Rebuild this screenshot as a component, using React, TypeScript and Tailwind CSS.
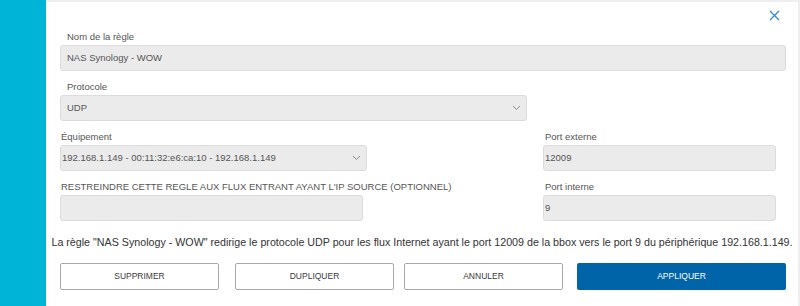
import { ReactNode } from "react";

const font = { fontFamily: '"Liberation Sans", Arial, sans-serif' };

function Label({ children, className = "pl-[7px]" }: { children: ReactNode; className?: string }) {
  return <div className={`h-4 whitespace-nowrap text-[9.5px] leading-4 text-[#555] ${className}`}>{children}</div>;
}

function Field({ value, className = "" }: { value?: string; className?: string }) {
  return (
    <div
      className={`flex h-[26px] items-center rounded-[3px] border border-[#dcdcdc] bg-[#ebebeb] text-[9.5px] text-[#555] ${className}`}
    >
      {value}
    </div>
  );
}

function Select({ value, className = "" }: { value: string; className?: string }) {
  return (
    <div
      className={`flex h-[26px] items-center justify-between rounded-[3px] border border-[#dcdcdc] bg-[#ebebeb] pr-[5px] text-[9.5px] text-[#555] ${className}`}
    >
      <span>{value}</span>
      <svg width="9" height="6" viewBox="0 0 9 6" fill="none">
        <path d="M1 1l3.5 3.5L8 1" stroke="#8a8a8a" strokeWidth="1" />
      </svg>
    </div>
  );
}

function Button({ children, primary, className = "" }: { children: ReactNode; primary?: boolean; className?: string }) {
  return (
    <button
      className={`flex h-[27px] items-center justify-center rounded-[2px] text-[8.5px] ${
        primary ? "bg-[#0064a8] text-white" : "border border-[#a9a9a9] bg-white text-[#3a3a3a]"
      } ${className}`}
    >
      {children}
    </button>
  );
}

export default function App() {
  return (
    <div className="flex h-[306px] w-[800px] overflow-hidden bg-white" style={font}>
      <div className="w-[46px] shrink-0 bg-[#00b4d7]" />
      <div className="relative min-w-0 flex-1 border-r-2 border-t-2 border-[#efefef] pl-[14px] pr-[12px] pt-[27px]">
        <button className="absolute right-[18px] top-[8px] text-[#3a8bd0]">
          <svg width="11" height="11" viewBox="0 0 11 11" fill="none">
            <path d="M1 1l9 9M10 1l-9 9" stroke="currentColor" strokeWidth="1.4" />
          </svg>
        </button>

        <Label>Nom de la règle</Label>
        <Field value="NAS Synology - WOW" className="mb-2 pl-[6px]" />

        <Label>Protocole</Label>
        <Select value="UDP" className="mb-2 w-[467px] pl-[6px]" />

        <div className="flex">
          <div className="w-[307px]">
            <Label className="pl-[1px]">Équipement</Label>
            <Select value="192.168.1.149 - 00:11:32:e6:ca:10 - 192.168.1.149" className="mb-2 pl-[1px]" />
            <Label className="pl-[1px]">
              RESTREINDRE CETTE REGLE AUX FLUX ENTRANT AYANT L'IP SOURCE (OPTIONNEL)
            </Label>
            <Field className="w-[303px]" />
          </div>
          <div className="ml-[176px] w-[233px]">
            <Label className="pl-[2px]">Port externe</Label>
            <Field value="12009" className="mb-2 pl-[1px]" />
            <Label className="pl-[2px]">Port interne</Label>
            <Field value="9" className="pl-[1px]" />
          </div>
        </div>

        <div className="-ml-[14px] -mr-[12px] mt-[13px] flex justify-center">
          <p className="whitespace-nowrap text-[10.7px] leading-4 text-[#333]">
            La règle "NAS Synology - WOW" redirige le protocole UDP pour les flux Internet ayant le port 12009 de la bbox vers le port 9 du périphérique 192.168.1.149.
          </p>
        </div>

        <div className="mt-[13px] flex">
          <Button className="w-[159px]">SUPPRIMER</Button>
          <Button className="ml-[16px] w-[159px]">DUPLIQUER</Button>
          <Button className="ml-[10px] w-[159px]">ANNULER</Button>
          <Button primary className="ml-[14px] w-[209px]">APPLIQUER</Button>
        </div>
      </div>
    </div>
  );
}
